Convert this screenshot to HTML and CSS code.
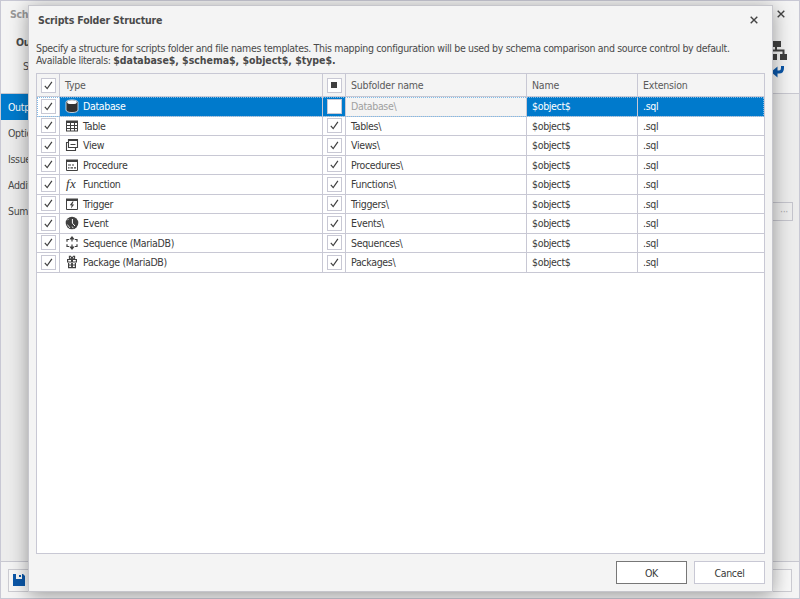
FILE: index.html
```html
<!DOCTYPE html>
<html lang="en">
<head>
    <meta charset="UTF-8">
    <meta name="viewport" content="width=device-width, initial-scale=1.0">
    <title>Scripts Folder Structure</title>
    <link rel="stylesheet" href="styles.css">
</head>
<body>

    <!-- Icons -->
    <svg class="sprite">
        <symbol id="check" viewBox="0 0 9 9"><path d="M0.8 4.8L3.2 7.6L7.9 0.9" fill="none" stroke="currentColor" stroke-width="1.2"/></symbol>
        <symbol id="close" viewBox="0 0 8 8"><path d="M0.7 0.7L7.3 7.3M7.3 0.7L0.7 7.3" fill="none" stroke="currentColor" stroke-width="1.4"/></symbol>
        <symbol id="database" viewBox="0 0 14 14">
            <path d="M1 3.2C1 0.2 13 0.2 13 3.2V11C13 14.4 1 14.4 1 11Z" fill="#333" stroke="#e8eef4" stroke-width="0.8"/>
            <ellipse cx="7" cy="3.2" rx="4.9" ry="1.9" fill="#fff"/>
        </symbol>
        <symbol id="table" viewBox="0 0 14 14">
            <path d="M1 1.5H13V12.5H1Z" fill="#404040"/>
            <path d="M2 4h3v2H2zM6 4h3v2H6zM10 4h2v2h-2zM2 7h3v2H2zM6 7h3v2H6zM10 7h2v2h-2zM2 10h3v1.6H2zM6 10h3v1.6H6zM10 10h2v1.6h-2z" fill="#fff"/>
        </symbol>
        <symbol id="view" viewBox="0 0 14 14">
            <path d="M3.5 1.5H12.5V9.5H3.5ZM3.5 4.5H1.5V12.5H10.5V9.5M5.5 6.5H10.5" fill="none" stroke="#404040" stroke-width="1.1"/>
            <path d="M3 1H13V3H3Z" fill="#404040"/>
        </symbol>
        <symbol id="procedure" viewBox="0 0 14 14">
            <path d="M1.5 2.5H12.5V12.5H1.5Z" fill="none" stroke="#404040"/>
            <path d="M1 1.5H13V4H1Z" fill="#404040"/>
            <path d="M3 7H6M7 7H9M3 9.8H4.5M5.5 9.8H8M9 9.8H11" stroke="#404040" stroke-width="1.2"/>
        </symbol>
        <symbol id="trigger" viewBox="0 0 14 14">
            <path d="M1.5 2.5H12.5V12.5H1.5Z" fill="none" stroke="#404040"/>
            <path d="M1 1.5H13V4H1Z" fill="#404040"/>
            <path d="M7.5 4.5L4.8 8.2H6.6L6 11.5L9.2 7.4H7.2L8.6 4.5Z" fill="#404040"/>
        </symbol>
        <symbol id="event" viewBox="0 0 14 14">
            <circle cx="7" cy="7" r="6.3" fill="#404040"/>
            <path d="M7.4 3V7.2L10 10" fill="none" stroke="#fff" stroke-width="1"/>
            <path d="M2.3 8.5L5 12M2.5 4.2L3.4 3.2M8.2 12.2L7.2 10.5" fill="none" stroke="#fff" stroke-width="0.8"/>
        </symbol>
        <symbol id="sequence" viewBox="0 0 14 14">
            <path d="M4 3.5H2V5.8M2 8.2V10.5H4M10 3.5H12V5.8M12 8.2V10.5H10M7 2V5.6M7 8.4V12" fill="none" stroke="#404040" stroke-width="1.2"/>
            <path d="M4.2 3.4L7 0L9.8 3.4ZM4.2 10.6L7 14L9.8 10.6Z" fill="#404040"/>
        </symbol>
        <symbol id="package" viewBox="0 0 14 14">
            <path d="M2 4H12V7.4H2ZM3 8H11V13.2H3Z" fill="#404040"/>
            <path d="M6.8 4.2L4.4 3.4V1.2H5.6L7 3.4L8.4 1.2H9.6V3.4L7.2 4.2" fill="none" stroke="#404040" stroke-width="1.1"/>
            <path d="M3.2 5H6V6.4H3.2ZM8 5H10.8V6.4H8ZM4.2 8H6.1V9.6H4.2ZM7.9 8H9.8V9.6H7.9ZM4.2 10.6H6.1V12.1H4.2ZM7.9 10.6H9.8V12.1H7.9Z" fill="#fff"/>
        </symbol>
    </svg>

    <!-- Parent wizard -->
    <div class="wizard">
        <header class="wizard-head">
            <div class="wizard-titles">
                <div class="wizard-title">Sch</div>
                <div class="wizard-step">Ou</div>
                <div class="wizard-hint">S</div>
            </div>
            <div class="wizard-corner">
                <svg class="close"><use href="#close"/></svg>
                <svg class="schema-icon" viewBox="0 0 30 38">
                    <path d="M14 1H24V7H14ZM2 14H10V20H2ZM12 14H20V20H12ZM23 14H30V20H23Z" fill="#404040"/>
                    <path d="M19 6V10.5M6 15V10.5H26.5V15" fill="none" stroke="#404040" stroke-width="2"/>
                    <path d="M25.5 26V28Q25.5 32 22 32H18" fill="none" stroke="#0b57a8" stroke-width="3"/>
                    <path d="M20.5 26.5L14 32L20.5 37.5Z" fill="#0b57a8"/>
                </svg>
            </div>
        </header>
        <div class="wizard-body">
            <nav class="steps">
                <div class="step current">Outp</div>
                <div class="step">Optio</div>
                <div class="step">Issue</div>
                <div class="step">Addit</div>
                <div class="step">Sumn</div>
            </nav>
            <div class="browse">···</div>
        </div>
        <footer class="wizard-foot">
            <div class="foot-bar">
                <svg class="save" viewBox="0 0 12 12"><path d="M0 0H3V5H9V0H10L12 2V12H0Z" fill="#0b57a8"/><path d="M6 1H8V3H6Z" fill="#0b57a8"/></svg>
            </div>
        </footer>
    </div>

    <!-- Dialog -->
    <div class="dialog">
        <div class="dialog-head">
            <h1>Scripts Folder Structure</h1>
            <svg class="close"><use href="#close"/></svg>
        </div>
        <div class="description">
            <p>Specify a structure for scripts folder and file names templates. This mapping configuration will be used by schema comparison and source control by default.</p>
            <p>Available literals: <b>$database$, $schema$, $object$, $type$.</b></p>
        </div>
        <div class="grid">
            <div class="row head">
                <div class="cell mark"><span class="box"><svg><use href="#check"/></svg></span></div>
                <div class="cell type">Type</div>
                <div class="cell mark"><span class="box"><i class="partial"></i></span></div>
                <div class="cell">Subfolder name</div>
                <div class="cell">Name</div>
                <div class="cell">Extension</div>
            </div>
            <div id="rows"></div>
        </div>
        <div class="buttons">
            <button class="ok">OK</button>
            <button>Cancel</button>
        </div>
    </div>

    <script>
        var rows = [
            ['database', 'Database', 'Database'],
            ['table', 'Table', 'Tables'],
            ['view', 'View', 'Views'],
            ['procedure', 'Procedure', 'Procedures'],
            ['function', 'Function', 'Functions'],
            ['trigger', 'Trigger', 'Triggers'],
            ['event', 'Event', 'Events'],
            ['sequence', 'Sequence (MariaDB)', 'Sequences'],
            ['package', 'Package (MariaDB)', 'Packages']
        ];
        var check = '<svg><use href="#check"/></svg>';

        document.getElementById('rows').innerHTML = rows.map(function(row, index) {
            // The function icon is plain text, the others are svg symbols
            var icon = row[0] === 'function'
                ? '<span class="fx">fx</span>'
                : '<svg class="icon"><use href="#' + row[0] + '"/></svg>';

            return '<div class="row' + (index === 0 ? ' selected' : '') + '">' +
                '<div class="cell mark"><span class="box">' + check + '</span></div>' +
                '<div class="cell type">' + icon + '<span class="label">' + row[1] + '</span></div>' +
                '<div class="cell mark"><span class="box">' + (index === 0 ? '' : check) + '</span></div>' +
                '<div class="cell folder">' + row[2] + '\\</div>' +
                '<div class="cell">$object$</div>' +
                '<div class="cell">.sql</div>' +
                '</div>';
        }).join('');
    </script>
</body>
</html>
```
FILE: styles.css
```css
* {
    box-sizing: border-box;
}

body {
    margin: 0;
    height: 599px;
    overflow: hidden;
    position: relative;
    font-family: Tahoma, "DejaVu Sans Condensed", "DejaVu Sans", sans-serif;
    font-stretch: condensed;
    font-size: 10.5px;
    letter-spacing: -0.33px;
    color: #4a4a4a;
    background-color: #f4f4f4;
}

.sprite {
    display: none;
}

/* Wizard behind the dialog */
.wizard {
    height: 599px;
    display: flex;
    flex-direction: column;
    border: 1px solid #c8c8d4;
    white-space: nowrap;
}

.wizard-head {
    height: 93px;
    display: flex;
    justify-content: space-between;
    border-bottom: 1px solid #c8c8d0;
}

.wizard-titles {
    width: 28px;
    padding: 6px 0 0 9px;
}

.wizard-title {
    color: #999;
    font-weight: bold;
    line-height: 14px;
}

.wizard-step {
    padding: 14px 0 0 6px;
    font-weight: bold;
    line-height: 14px;
}

.wizard-hint {
    padding: 10px 0 0 13px;
    line-height: 14px;
}

.wizard-corner {
    display: flex;
    flex-direction: column;
    align-items: flex-end;
    padding: 9px 12px 0 0;
}

.close {
    width: 8px;
    height: 8px;
    color: #444;
}

.wizard-corner .close {
    margin-right: 2px;
}

.schema-icon {
    width: 30px;
    height: 38px;
    margin-top: 22px;
}

.wizard-body {
    flex: 1;
    display: flex;
    justify-content: space-between;
    background-color: #ececec;
}

.steps {
    width: 150px;
}

.step {
    height: 26px;
    line-height: 26px;
    padding-left: 7px;
}

.step.current {
    color: #fff;
    background-color: #007acc;
}

.browse {
    width: 40px;
    height: 19px;
    margin: 108px 6px 0 0;
    padding-right: 4px;
    line-height: 16px;
    text-align: right;
    color: #aaa;
    border: 1px solid #c4c4cc;
}

.wizard-foot {
    height: 37px;
    padding: 7px 7px 0;
    border-top: 1px solid #c8c8d0;
}

.foot-bar {
    height: 23px;
    padding: 4px;
    border: 1px solid #ccccd2;
    background-color: #f8f8f8;
}

.save {
    display: block;
    width: 12px;
    height: 12px;
}

/* Dialog */
.dialog {
    position: absolute;
    left: 28px;
    top: 5px;
    width: 745px;
    height: 587px;
    padding: 0 8px;
    background-color: #f4f4f4;
    border: 1px solid #c6c6cc;
    box-shadow: 0 3px 18px rgba(0, 0, 0, 0.38);
}

.dialog-head {
    height: 36px;
    display: flex;
    justify-content: space-between;
    align-items: center;
    padding: 0 6px 8px 1px;
}

h1 {
    margin: 0;
    font-size: 10.5px;
    line-height: 14px;
    letter-spacing: -0.15px;
}

.description {
    height: 31px;
    margin-left: -1px;
}

.description p {
    margin: 0;
    line-height: 12px;
    white-space: nowrap;
}

.description b {
    letter-spacing: -0.03px;
}

.grid {
    height: 481px;
    margin: 0 -1px;
    background-color: #fff;
    border: 1px solid #c8c8d4;
}

.row {
    position: relative;
    height: 19.5px;
    display: grid;
    grid-template-columns: 23px 263px 23px 181px 111px 1fr;
    border-bottom: 1px solid #c8c8d4;
    color: #3a3a3a;
}

.cell {
    display: flex;
    align-items: center;
    padding-left: 5px;
    border-right: 1px solid #c8c8d4;
    min-width: 0;
    white-space: nowrap;
}

.cell:last-child {
    border-right: none;
}

.row.head {
    height: 23px;
    letter-spacing: -0.2px;
    background-color: #f4f4f4;
    color: #5a5a5a;
}

.mark {
    padding: 0;
    justify-content: center;
}

.box {
    width: 15px;
    height: 15px;
    display: flex;
    align-items: center;
    justify-content: center;
    background-color: #fff;
    border: 1px solid #c8c8d4;
    color: #404040;
}

.box svg {
    width: 9px;
    height: 9px;
}

.partial {
    width: 6px;
    height: 6px;
    background-color: #404040;
}

.icon {
    width: 14px;
    height: 14px;
    margin-right: 4px;
}

.fx {
    width: 18px;
    padding-left: 1px;
    font: italic 13px/14px "Liberation Serif", serif;
    letter-spacing: 0.5px;
    color: #333;
}

.row.selected {
    color: #fff;
    background-color: #007acc;
}

/* Dotted focus line drawn over the cells */
.row.selected::after {
    content: "";
    position: absolute;
    inset: 0 0 -1px 0;
    border: 1px dotted #7fbce8;
}

.selected .mark:first-child {
    background-color: #fff;
}

.selected .folder {
    color: #a0a0a0;
    background-color: #f4f4f4;
}

.buttons {
    display: flex;
    justify-content: flex-end;
    gap: 7px;
    margin: 7px -1px 0 0;
}

button {
    width: 71px;
    height: 23px;
    padding: 0;
    font: inherit;
    letter-spacing: inherit;
    color: #3a3a3a;
    background-color: #fff;
    border: 1px solid #c8c8d4;
}

button.ok {
    border-color: #777;
}
```
